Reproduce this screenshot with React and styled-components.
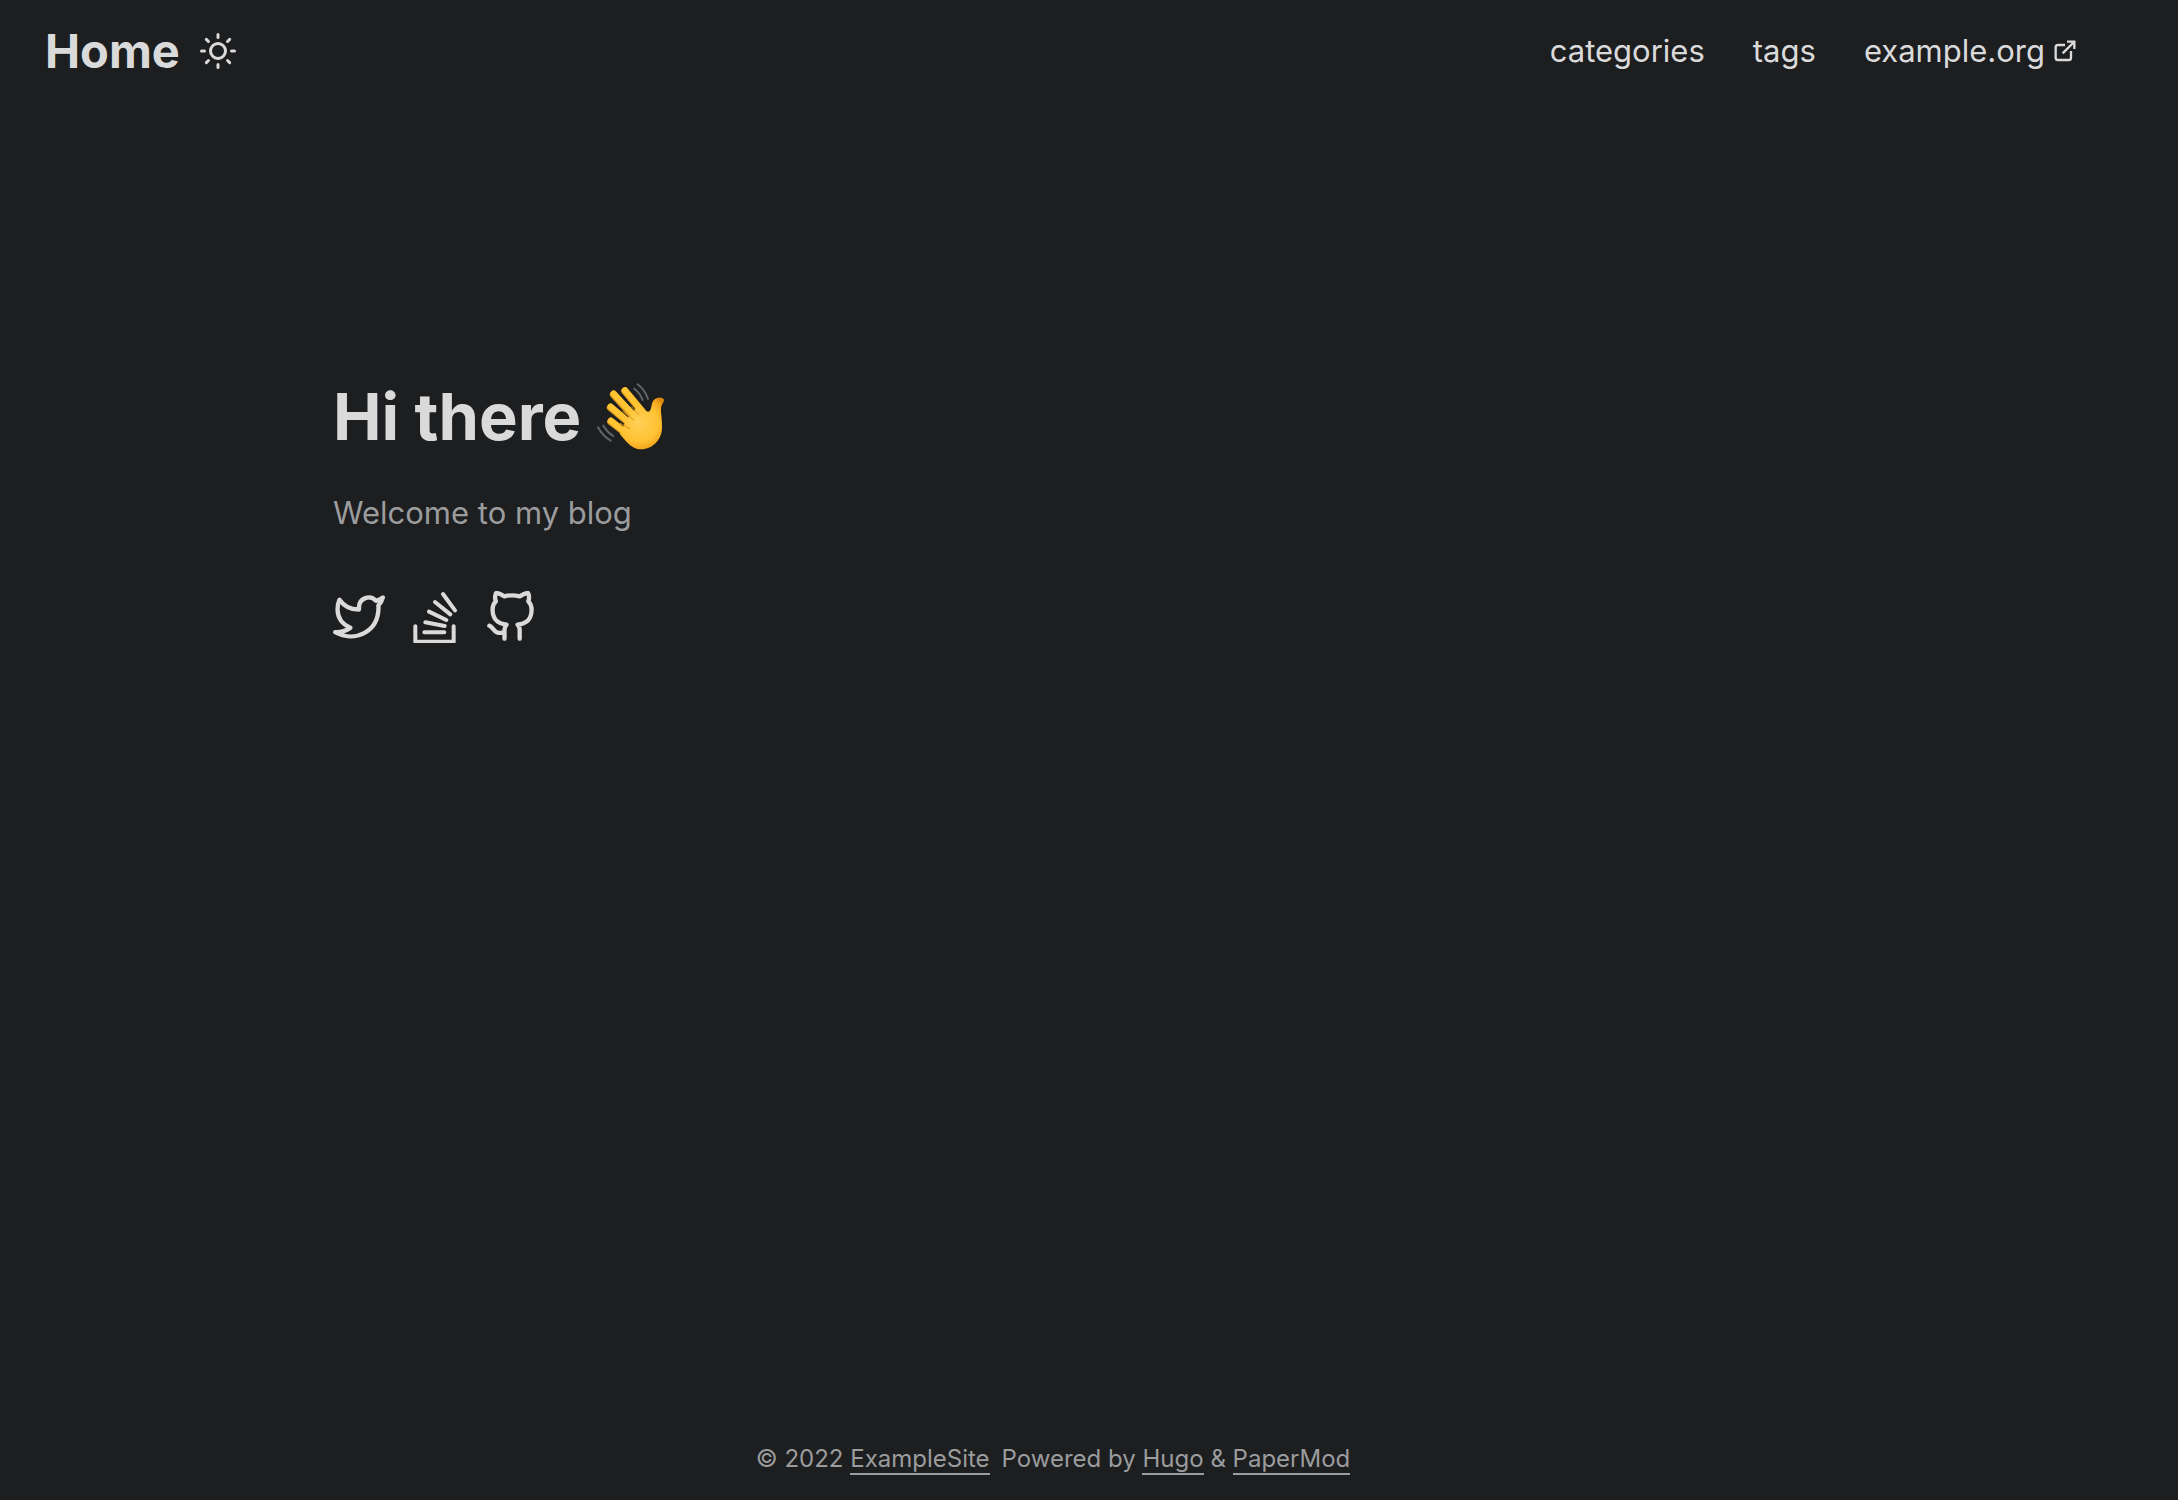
import React from "react";
import styled, { createGlobalStyle } from "styled-components";

const colors = {
  background: "#1d1e20",
  primary: "#dadadb",
  secondary: "#9b9c9d",
};

const GlobalStyle = createGlobalStyle`
  *, *::before, *::after { box-sizing: border-box; }
  body {
    margin: 0;
    background: ${colors.background};
    color: ${colors.primary};
    font-family: Inter, "Liberation Sans", sans-serif;
    font-size: 31px;
    line-height: 52px;
  }
  a { color: inherit; text-decoration: none; }
`;

const Page = styled.div`
  display: flex;
  flex-direction: column;
  min-height: 100vh;
  padding-right: 72px;
`;

const Header = styled.header`
  display: flex;
  justify-content: space-between;
  align-items: center;
  height: 102px;
  padding: 0 29px 0 45px;
`;

const Brand = styled.div`
  display: flex;
  align-items: center;
  gap: 20px;
`;

const Logo = styled.a`
  font-size: 47px;
  font-weight: 700;
`;

const ThemeButton = styled.button`
  display: flex;
  padding: 0;
  border: 0;
  background: none;
  color: inherit;
  cursor: pointer;
`;

const Menu = styled.ul`
  display: flex;
  gap: 48px;
  margin: 0;
  padding: 0;
  list-style: none;
`;

const MenuLink = styled.a`
  display: flex;
  align-items: center;
  gap: 8px;
`;

const Main = styled.main`
  flex: 1;
  width: 100%;
  max-width: 1440px;
  margin: 0 auto;
`;

const Hero = styled.article`
  display: flex;
  flex-direction: column;
  justify-content: center;
  min-height: 812px;
`;

const Title = styled.h1`
  display: flex;
  align-items: center;
  gap: 16px;
  margin: 0;
  font-size: 65px;
  font-weight: 700;
  line-height: 88px;
`;

const Intro = styled.p`
  margin: 26px 0 52px;
  color: ${colors.secondary};
`;

const Socials = styled.div`
  display: flex;
  gap: 24px;
`;

const SocialLink = styled.a`
  display: flex;
`;

const Footer = styled.footer`
  display: flex;
  justify-content: center;
  gap: 12px;
  padding: 16px 24px 17px;
  color: ${colors.secondary};
  font-size: 24px;
  line-height: 48px;
`;

const FooterLink = styled.a`
  border-bottom: 2px solid ${colors.secondary};
`;

const Icon = styled.svg.attrs((p) => ({
  viewBox: p.viewBox || "0 0 24 24",
  fill: "none",
  stroke: "currentColor",
  strokeLinecap: p.strokeLinecap || "round",
  strokeLinejoin: p.strokeLinejoin || "round",
  "aria-hidden": true,
}))`
  display: block;
  width: ${(p) => p.$size}px;
  height: ${(p) => p.$size}px;
  stroke-width: ${(p) => p.$weight || 2};
`;

const EmojiSvg = styled.svg`
  display: block;
  width: 68px;
  height: 68px;
`;

function WavingHand() {
  return (
    <EmojiSvg viewBox="18 21 204 204" role="img" aria-label="waving hand">
      <defs>
        <radialGradient id="skin" gradientUnits="userSpaceOnUse" cx="145" cy="140" r="95">
          <stop offset="0" stopColor="#ffd057" />
          <stop offset="0.6" stopColor="#ffc233" />
          <stop offset="0.85" stopColor="#f3a51d" />
          <stop offset="1" stopColor="#d9820c" />
        </radialGradient>
      </defs>
      <g stroke="#dc951e" strokeWidth="21" strokeLinecap="round">
        <path d="M101 45L155 110M67 56L125 120M58 95L112 140M59 137L112 178" />
      </g>
      <g stroke="#ffc431" strokeWidth="19" strokeLinecap="round">
        <path d="M102 43L162 115M68 53L135 125M59 92L125 148M60 134L120 182" />
      </g>
      <path
        fill="url(#skin)"
        d="M144 86C153 97 162 108 173 107C183 105 179 84 188 73C197 62 215 62 219 71C221 77 211 84 210 96C209 110 214 132 213 157C212 191 185 220 151 220C130 220 115 207 101 191L86 174L108 128Z"
      />
      <path
        d="M121 92L143 115M95 106L128 132M88 142L116 158"
        fill="none"
        stroke="#d8921d"
        strokeWidth="3"
        strokeLinecap="round"
      />
      <g fill="none" stroke="#626366" strokeWidth="6" strokeLinecap="round">
        <path d="M140 25Q162 42 171 69M130 38Q148 52 155 72M37 149Q48 168 67 180M21 154Q35 180 59 194" />
      </g>
    </EmojiSvg>
  );
}

export default function App() {
  return (
    <>
      <GlobalStyle />
      <Page>
        <Header>
          <Brand>
            <Logo href="#">Home</Logo>
            <ThemeButton type="button" aria-label="Toggle theme">
              <Icon $size={36}>
                <circle cx="12" cy="12" r="5" />
                <path d="M12 1v2M12 21v2M4.22 4.22l1.42 1.42M18.36 18.36l1.42 1.42M1 12h2M21 12h2M4.22 19.78l1.42-1.42M18.36 5.64l1.42-1.42" />
              </Icon>
            </ThemeButton>
          </Brand>
          <nav>
            <Menu>
              <li><MenuLink href="#">categories</MenuLink></li>
              <li><MenuLink href="#">tags</MenuLink></li>
              <li>
                <MenuLink href="#">
                  example.org
                  <Icon $size={24} $weight={7} viewBox="0 0 72 72" strokeLinecap="butt" strokeLinejoin="miter">
                    <path d="M36 18H15a7 7 0 0 0-7 7v31a7 7 0 0 0 7 7h32a7 7 0 0 0 7-7V36M29 43L63 9M42 8H64V30" />
                  </Icon>
                </MenuLink>
              </li>
            </Menu>
          </nav>
        </Header>
        <Main>
          <Hero>
            <Title>Hi there <WavingHand /></Title>
            <Intro>Welcome to my blog</Intro>
            <Socials>
              <SocialLink href="#" aria-label="Twitter">
                <Icon $size={52}>
                  <path d="M23 3a10.9 10.9 0 0 1-3.14 1.53 4.48 4.48 0 0 0-7.86 3v1A10.66 10.66 0 0 1 3 4s-4 9 5 13a11.64 11.64 0 0 1-7 2c9 5 20 0 20-11.5a4.5 4.5 0 0 0-.08-.83A7.72 7.72 0 0 0 23 3z" />
                </Icon>
              </SocialLink>
              <SocialLink href="#" aria-label="Stack Overflow">
                <Icon $size={52} $weight={12} viewBox="0 0 156 156">
                  <path d="M19 106V152H134V106M46 124H106M49 94L107 105M60 62L112 87M78 33L124 70M102 9L138 58" />
                </Icon>
              </SocialLink>
              <SocialLink href="#" aria-label="GitHub">
                <Icon $size={52}>
                  <path d="M9 19c-5 1.5-5-2.5-7-3m14 6v-3.87a3.37 3.37 0 0 0-.94-2.61c3.14-.35 6.44-1.54 6.44-7A5.44 5.44 0 0 0 20 4.77 5.07 5.07 0 0 0 19.91 1S18.73.65 16 2.48a13.38 13.38 0 0 0-7 0C6.27.65 5.09 1 5.09 1A5.07 5.07 0 0 0 5 4.77a5.44 5.44 0 0 0-1.5 3.78c0 5.42 3.3 6.61 6.44 7A3.37 3.37 0 0 0 9 18.13V22" />
                </Icon>
              </SocialLink>
            </Socials>
          </Hero>
        </Main>
        <Footer>
          <span>© 2022 <FooterLink href="#">ExampleSite</FooterLink></span>
          <span>
            Powered by <FooterLink href="#">Hugo</FooterLink> &amp; <FooterLink href="#">PaperMod</FooterLink>
          </span>
        </Footer>
      </Page>
    </>
  );
}
